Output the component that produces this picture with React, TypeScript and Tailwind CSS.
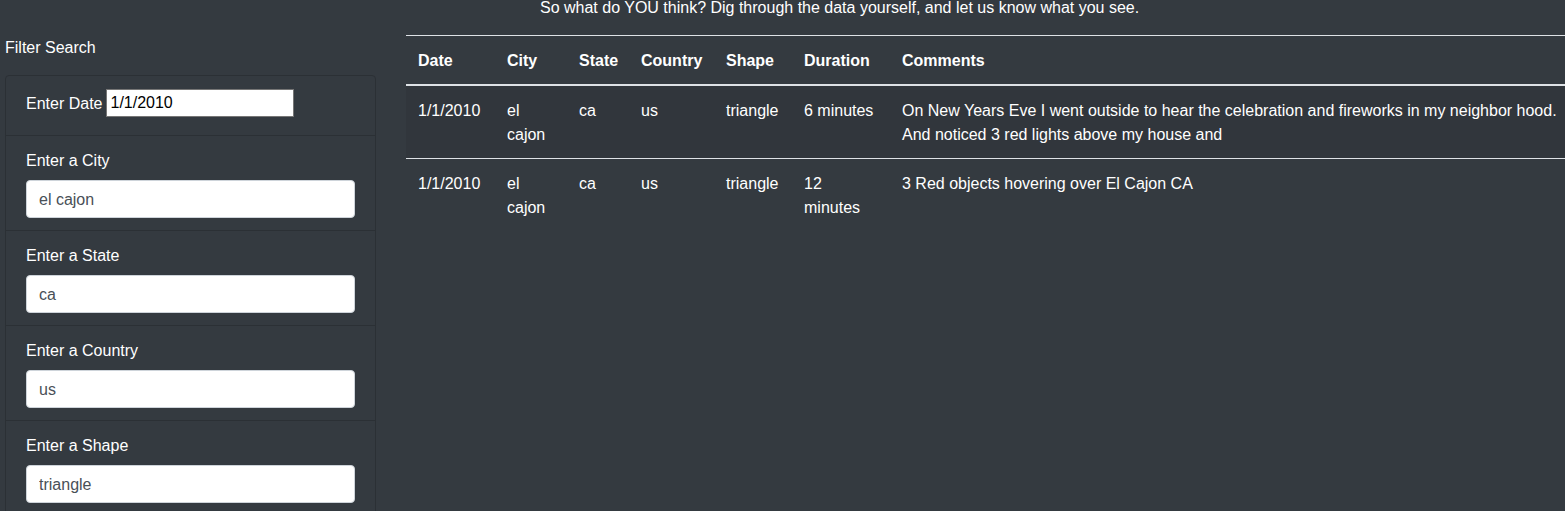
import React from 'react';

const sightings = [
    {
        date: '1/1/2010',
        city: 'el cajon',
        state: 'ca',
        country: 'us',
        shape: 'triangle',
        duration: '6 minutes',
        comments: 'On New Years Eve I went outside to hear the celebration and fireworks in my neighbor hood. And noticed 3 red lights above my house and',
    },
    {
        date: '1/1/2010',
        city: 'el cajon',
        state: 'ca',
        country: 'us',
        shape: 'triangle',
        duration: '12 minutes',
        comments: '3 Red objects hovering over El Cajon CA',
    },
];

const filters = [
    { label: 'Enter a City', value: 'el cajon' },
    { label: 'Enter a State', value: 'ca' },
    { label: 'Enter a Country', value: 'us' },
    { label: 'Enter a Shape', value: 'triangle' },
];

export default function App() {
    return (
        <div className="h-[511px] overflow-hidden bg-[#343a40] text-white text-base font-['Liberation_Sans',sans-serif]">
            <p className="h-4 leading-4 pl-[540px] whitespace-nowrap">
                So what do YOU think? Dig through the data yourself, and let us know what you see.
            </p>

            <div className="flex mt-[19px]">
                {/* filters */}
                <aside className="w-[391px] shrink-0 pl-[5px] pr-[15px]">
                    <h5 className="leading-6 pt-px">Filter Search</h5>
                    <ul className="mt-[15px] border border-[#2b3035] rounded-t">
                        <li className="h-[59px] pt-[13px] px-5 flex items-start gap-1">
                            <label className="leading-7 pt-px">Enter Date</label>
                            <input
                                type="text"
                                defaultValue="1/1/2010"
                                className="w-[188px] h-7 border border-[#767676] bg-white text-black px-[3px] outline-none"
                            />
                        </li>
                        {filters.map((f) => (
                            <li key={f.label} className="border-t border-[#2b3035] pt-3 pb-3 px-5">
                                <label className="block leading-6 pt-px -mb-px">{f.label}</label>
                                <input
                                    type="text"
                                    defaultValue={f.value}
                                    className="mt-2 w-full h-[38px] rounded border border-[#ced4da] bg-white text-[#495057] px-3 pt-px outline-none"
                                />
                            </li>
                        ))}
                    </ul>
                </aside>

                {/* results */}
                <div className="flex-1 min-w-0 pl-[15px]">
                    <table className="w-[1172px] table-fixed border-collapse text-left">
                        <colgroup>
                            <col className="w-[89px]" />
                            <col className="w-[72px]" />
                            <col className="w-[62px]" />
                            <col className="w-[85px]" />
                            <col className="w-[78px]" />
                            <col className="w-[98px]" />
                            <col />
                        </colgroup>
                        <thead>
                            <tr className="border-t border-b-2 border-t-[#dee2e6] border-b-[#dee2e6]">
                                {['Date', 'City', 'State', 'Country', 'Shape', 'Duration', 'Comments'].map((h) => (
                                    <th key={h} className="pt-[13px] pb-[11px] px-3 leading-6 font-bold align-bottom">{h}</th>
                                ))}
                            </tr>
                        </thead>
                        <tbody>
                            {sightings.map((s, i) => (
                                <tr key={i} className={i === 0 ? 'bg-[#31363c]' : 'border-t border-[#dee2e6]'}>
                                    <td className="pt-[13px] pb-[11px] px-3 leading-6 align-top">{s.date}</td>
                                    <td className="pt-[13px] pb-[11px] px-3 leading-6 align-top">{s.city}</td>
                                    <td className="pt-[13px] pb-[11px] px-3 leading-6 align-top">{s.state}</td>
                                    <td className="pt-[13px] pb-[11px] px-3 leading-6 align-top">{s.country}</td>
                                    <td className="pt-[13px] pb-[11px] px-3 leading-6 align-top">{s.shape}</td>
                                    <td className="pt-[13px] pb-[11px] px-3 leading-6 align-top">{s.duration}</td>
                                    <td className="pt-[13px] pb-[11px] px-3 leading-6 align-top">{s.comments}</td>
                                </tr>
                            ))}
                        </tbody>
                    </table>
                </div>
            </div>
        </div>
    );
}
